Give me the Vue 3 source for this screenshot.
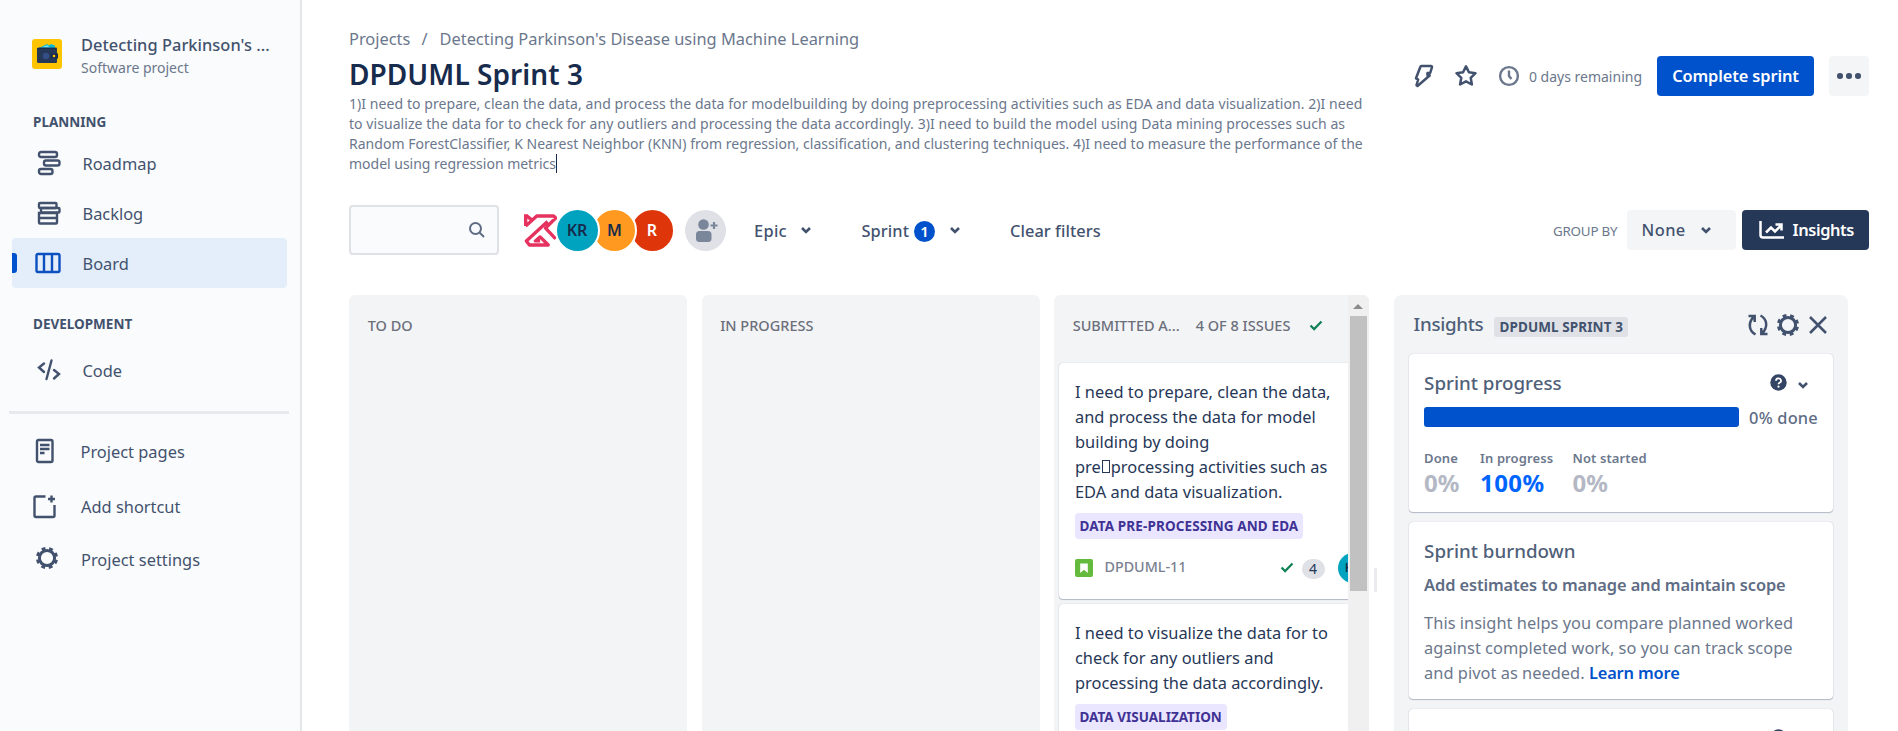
<script setup>
const filters = [
  { name: 'KR', cls: 'teal' },
  { name: 'M', cls: 'amber' },
  { name: 'R', cls: 'red' }
]
const goal = [
  '1)I need to prepare, clean the data, and process the data for modelbuilding by doing preprocessing activities such as EDA and data visualization. 2)I need',
  'to visualize the data for to check for any outliers and processing the data accordingly. 3)I need to build the model using Data mining processes such as',
  'Random ForestClassifier, K Nearest Neighbor (KNN) from regression, classification, and clustering techniques. 4)I need to measure the performance of the'
]
const stats = [
  { label: 'Done', value: '0%', cls: 'done' },
  { label: 'In progress', value: '100%', cls: 'progress' },
  { label: 'Not started', value: '0%', cls: 'todo' }
]
</script>

<template>
  <div class="app">
    <aside class="sidebar">
      <div class="project">
        <svg class="logo" width="30" height="30" viewBox="0 0 30 30">
          <rect width="30" height="30" rx="3" fill="#FFC400" />
          <path d="M7 9 12 6.500 15 5l2 1.500L19 5l4 1.500L22.500 10H7z" fill="#00B8D9" />
          <path d="M10 8.500 15 6l3 2.500z" fill="#79E2F2" />
          <path d="M6.500 8.500H24a1 1 0 0 1 1 1V14.500a1.500 1.500 0 0 1 1 1.500v2a1.500 1.500 0 0 1-1 1.500V23a1 1 0 0 1-1 1H6.500a1.500 1.500 0 0 1-1.500-1.500V10a1.500 1.500 0 0 1 1.500-1.500z" fill="#253858" />
          <path d="M5.500 9.500H24" stroke="#172B4D" />
          <circle cx="14" cy="17" r="3.200" fill="#344E86" />
          <path d="M21 14.500h5v5h-5a2.500 2.500 0 0 1 0-5z" fill="#172B4D" />
          <circle cx="22" cy="17" r="1.300" fill="#FFC400" />
        </svg>
        <div class="project-text">
          <div class="project-name">Detecting Parkinson's ...</div>
          <div class="project-type">Software project</div>
        </div>
      </div>

      <div class="heading">PLANNING</div>
      <a class="item">
        <svg width="24" height="26" viewBox="0 0 24 26" class="line">
          <rect x="2" y="2" width="18" height="5" rx="2" />
          <rect x="7" y="10.500" width="15.500" height="5" rx="2" />
          <rect x="2" y="19" width="13.500" height="5" rx="2" />
        </svg><span>Roadmap</span>
      </a>
      <a class="item">
        <svg width="24" height="26" viewBox="0 0 24 26" class="line">
          <rect x="2" y="3" width="17.500" height="5" rx="1" />
          <path d="M4 8h17.500a1 1 0 0 1 1 1v2.500a1 1 0 0 1-1 1H4" />
          <path d="M4 8v5" />
          <path d="M2 13h18v9.500a1 1 0 0 1-1 1H3a1 1 0 0 1-1-1zM2 18h18" />
        </svg><span>Backlog</span>
      </a>
      <a class="item active">
        <svg width="26" height="22" viewBox="0 0 26 22" class="line board">
          <rect x="1.500" y="2" width="23" height="18" rx="1.500" />
          <path d="M9 2v18M17 2v18" />
        </svg><span>Board</span>
      </a>
      <div class="heading dev">DEVELOPMENT</div>
      <a class="item">
        <svg width="24" height="24" viewBox="0 0 24 24" class="line">
          <path d="M7 5.500 2 9.500l5 4.500M17 12l5 4-5 4.500M14.500 2.500l-5 18.500" stroke-linecap="round" />
        </svg><span>Code</span>
      </a>
      <hr />
      <a class="item pages">
        <svg width="24" height="26" viewBox="0 0 24 26" class="line">
          <rect x="2" y="2" width="15.500" height="22" rx="1.500" />
          <path d="M5 7h9.500M5 11h9.500M5 15h4.500" />
        </svg><span>Project pages</span>
      </a>
      <a class="item add">
        <svg width="24" height="26" viewBox="0 0 24 26" class="line">
          <path d="M12.500 3.500H3a1.500 1.500 0 0 0-1.500 1.500v17.500A1.500 1.500 0 0 0 3 24h17a1.500 1.500 0 0 0 1.500-1.500V12" />
          <path d="M18.500 2.500v7M15 6h7" />
        </svg><span>Add shortcut</span>
      </a>
      <a class="item settings">
        <svg width="24" height="24" viewBox="0 0 24 24">
          <circle cx="12" cy="12" r="7.600" fill="none" stroke="#42526E" stroke-width="3" />
          <circle cx="12" cy="12" r="9.300" fill="none" stroke="#42526E" stroke-width="3.600" stroke-dasharray="3.700 3.604" stroke-dashoffset="-1.800" />
        </svg><span>Project settings</span>
      </a>
    </aside>

    <main>
      <header>
        <div class="head-left">
          <div class="crumbs"><span>Projects</span><span class="slash">/</span><span>Detecting Parkinson's Disease using Machine Learning</span></div>
          <h1>DPDUML Sprint 3</h1>
          <div class="goal">
            <div v-for="(g, i) in goal" :key="i" :class="'g' + i">{{ g }}</div>
            <div class="g3">model using regression metrics<i class="caret"></i></div>
          </div>
        </div>
        <div class="head-right">
          <svg class="bolt" width="20" height="24" viewBox="0 0 20 24"><path d="M7.500 2H17a1 1 0 0 1 1 1.200L16.200 9h-2.700v2.500h2.200L3.500 22l-1-1 1.700-5.500L2 14.300 6.300 3a1.500 1.500 0 0 1 1.200-1z" /></svg>
          <svg class="star" width="24" height="24" viewBox="0 0 24 24"><path d="M12 2.300l2.900 6 6.600.9-4.800 4.600 1.200 6.700-5.900-3.200-5.900 3.200 1.200-6.700-4.800-4.600 6.600-.9z" /></svg>
          <svg class="clock" width="22" height="22" viewBox="0 0 22 22"><circle cx="11" cy="11" r="8.900" /><path d="M11 5.500V11l2.500 3" /></svg>
          <span class="remain">0 days remaining</span>
          <button class="primary">Complete sprint</button>
          <button class="dots"><i></i><i></i><i></i></button>
        </div>
      </header>

      <div class="toolbar">
        <div class="search">
          <svg width="18" height="18" viewBox="0 0 18 18"><circle cx="7.500" cy="7.500" r="5.500" /><path d="M11.500 11.500 16 16" /></svg>
        </div>
        <div class="avatars">
          <svg class="klogo" width="33" height="33" viewBox="0 0 98 98">
            <path d="M5 1V36M5 36 38 6H88L94 12 64 42 94 74M70 22 7 80 16 92H72L48 68 34 80H48" />
            <path d="M6 4 24 18" />
          </svg>
          <span v-for="f in filters" :key="f.name" class="avatar" :class="f.cls">{{ f.name }}</span>
        </div>
        <span class="add-people">
          <svg width="41" height="41" viewBox="0 0 41 41"><circle cx="18.500" cy="14.500" r="5.300" /><rect x="11" y="21" width="15.500" height="11" rx="3.500" /><path d="M29 12v7M25.500 15.500h7" stroke="#7A869A" stroke-width="2.200" /></svg>
        </span>
        <span class="filter epic">Epic</span><svg class="chev c1" width="12" height="8" viewBox="0 0 12 8"><path d="M2 2l4 4 4-4" /></svg>
        <span class="filter sprint">Sprint</span><span class="count">1</span><svg class="chev c2" width="12" height="8" viewBox="0 0 12 8"><path d="M2 2l4 4 4-4" /></svg>
        <span class="filter clear">Clear filters</span>
        <span class="group">GROUP BY</span>
        <button class="none">None<svg class="chev" width="12" height="8" viewBox="0 0 12 8"><path d="M2 2l4 4 4-4" /></svg></button>
        <button class="insights-btn">
          <svg width="26" height="20" viewBox="0 0 26 20"><path d="M1.500 1v14a2.500 2.500 0 0 0 2.500 2.500h21" /><path d="M7 12.500l5-5 4 4L22 5.500M16.500 4.500H22.500v6" /></svg>
          Insights
        </button>
      </div>

      <div class="board-area">
        <section class="column"><div class="col-head">TO DO</div></section>
        <section class="column"><div class="col-head">IN PROGRESS</div></section>
        <section class="column scrolled">
          <div class="viewport">
            <div class="col-head"><span>SUBMITTED A...</span><span class="of">4 OF 8 ISSUES</span><svg class="check" width="14" height="11" viewBox="0 0 14 11"><path d="M1.500 5.500l3.600 3.600L12.500 1.500" /></svg></div>
            <article class="issue">
              <div class="summary">I need to prepare, clean the data,<br />and process the data for model<br />building by doing<br />pre<i class="tofu"></i>processing activities such as<br />EDA and data visualization.</div>
              <span class="label">DATA PRE-PROCESSING AND EDA</span>
              <div class="foot">
                <svg width="18" height="18" viewBox="0 0 18 18"><rect width="18" height="18" rx="2" fill="#63BA3C" /><path d="M5.200 4.500H12.800V14L9 10.800 5.200 14z" fill="#fff" /></svg>
                <span class="key">DPDUML-11</span>
                <svg class="check" width="14" height="11" viewBox="0 0 14 11"><path d="M1.500 5.500l3.600 3.600L12.500 1.500" /></svg>
                <span class="badge">4</span>
                <span class="mini">KR</span>
              </div>
            </article>
            <article class="issue">
              <div class="summary">I need to visualize the data for to<br />check for any outliers and<br />processing the data accordingly.</div>
              <span class="label second">DATA VISUALIZATION</span>
            </article>
          </div>
          <div class="scroll"><i class="arrow"></i><i class="thumb"></i></div>
        </section>
        <div class="handle"></div>
        <aside class="panel">
          <div class="panel-head">
            <span class="ptitle">Insights</span><span class="ptag">DPDUML SPRINT 3</span>
            <svg class="refresh" width="24" height="24" viewBox="0 0 24 24"><path d="M9.500 21.500C3 18 1.500 10 8 3.500M2.500 3H8.700V9M14.500 2.500C21 6 22.500 14 16 20.500M21.500 21H15.300V15" /></svg>
            <svg class="gear" width="24" height="24" viewBox="0 0 24 24">
              <circle cx="12" cy="12" r="7.600" fill="none" stroke="#42526E" stroke-width="3" />
              <circle cx="12" cy="12" r="9.300" fill="none" stroke="#42526E" stroke-width="3.600" stroke-dasharray="3.700 3.604" stroke-dashoffset="-1.800" />
            </svg>
            <svg class="close" width="20" height="20" viewBox="0 0 20 20"><path d="M2 2l16 16M18 2L2 18" /></svg>
          </div>
          <div class="card progress-card">
            <div class="ctitle">Sprint progress
              <svg class="help" width="17" height="17" viewBox="0 0 17 17"><circle cx="8.500" cy="8.500" r="8.200" fill="#344563" /><path d="M6 6.700a2.500 2.300 0 1 1 3.600 2Q8.500 9.300 8.500 10.300" fill="none" stroke="#fff" stroke-width="1.800" /><circle cx="8.500" cy="12.700" r="1.100" fill="#fff" /></svg>
              <svg class="chev" width="12" height="8" viewBox="0 0 12 8"><path d="M2 2l4 4 4-4" /></svg>
            </div>
            <div class="bar-row"><div class="bar"></div><span>0% done</span></div>
            <div class="stats">
              <div v-for="s in stats" :key="s.label" class="stat" :class="s.cls"><div class="slabel">{{ s.label }}</div><div class="svalue">{{ s.value }}</div></div>
            </div>
          </div>
          <div class="card burn">
            <div class="ctitle">Sprint burndown</div>
            <div class="sub">Add estimates to manage and maintain scope</div>
            <p>This insight helps you compare planned worked<br />against completed work, so you can track scope<br />and pivot as needed. <a>Learn more</a></p>
          </div>
          <div class="card epic-card">
            <div class="ctitle">Epic progress
              <svg class="help" width="17" height="17" viewBox="0 0 17 17"><circle cx="8.500" cy="8.500" r="8.200" fill="#344563" /></svg>
            </div>
          </div>
        </aside>
      </div>
    </main>
  </div>
</template>

<style>
html, body { overflow: hidden; background: #fff; }
</style>
<style scoped>
.app { display: flex; width: 1898px; height: 731px; overflow: hidden; font: 400 16.4px/22px "Noto Sans", sans-serif; color: #42526e; white-space: nowrap; }
.app * { box-sizing: border-box; }
svg { display: block; flex: none; }
button { border: 0; padding: 0; margin: 0; font: inherit; color: inherit; display: flex; align-items: center; }
.sidebar { width: 302px; flex: none; background: #fafbfc; border-right: 2px solid #e4e6ea; padding: 33px 0 0; }
.project { display: flex; height: 46px; padding-left: 32px; }
.logo { margin-top: 6px; }
.project-text { margin-left: 19px; }
.project-name { font-weight: 500; line-height: 24px; color: #42526e; letter-spacing: .04px; }
.project-type { font-size: 14px; line-height: 22px; color: #6b778c; }
.heading { margin: 33px 0 6px 33px; font-size: 13.500px; font-weight: 700; line-height: 20px; }
.heading.dev { margin: 26px 0 11px 33px; }
.item { display: flex; align-items: center; height: 50px; margin: 0 13px 0 12px; padding-left: 24px; border-radius: 4px; position: relative; }
.item svg { width: 26px; }
.item span { margin: 2px 0 0 20.500px; }
.line { fill: none; stroke: #42526e; stroke-width: 2.400; }
.active { background: #e4eefa; }
.active::before { content: ""; position: absolute; left: 0; top: 15px; width: 5px; height: 20px; background: #0052cc; border-radius: 0 3px 3px 0; }
.active svg { margin-left: -1px; margin-right: 1px; }
.active .line { stroke: #0c50c0; }
hr { border: 0; height: 3px; background: #e8e9ec; margin: 16px 11px 12px 9px; }
.pages svg { margin-left: -2px; margin-right: 2px; }
.pages span { margin-left: 18.500px; margin-top: 1px; }
.add { margin-top: 6px; }
.add svg { margin-left: -4px; margin-right: 4px; margin-top: -2px; }
.add span { margin-left: 19px; margin-top: 0; }
.settings { margin-top: 2px; }
.settings svg { margin-left: -2px; margin-right: 2px; margin-top: -3px; }
.settings span { margin-left: 19px; margin-top: 1px; }

main { flex: 1; min-width: 0; padding: 27px 29px 0 47px; }
header { display: flex; justify-content: space-between; height: 178px; }
.crumbs { display: flex; color: #6b778c; height: 23px; line-height: 23px; }
.slash { margin: 0 12px 0 11px; }
h1 { margin: 6px 0 0; font-size: 28px; line-height: 36px; font-weight: 600; color: #172b4d; letter-spacing: .05px; }
.goal { margin-top: 2px; font-size: 14px; line-height: 20px; letter-spacing: .057px; color: #6b778c; }
.g0 { letter-spacing: .067px; }
.g2 { letter-spacing: .025px; }
.g3 { letter-spacing: -.01px; }
.caret { display: inline-block; width: 1px; height: 19px; background: #172b4d; vertical-align: -4px; }
.head-right { display: flex; align-items: center; height: 40px; margin-top: 29px; }
.bolt { fill: none; stroke: #42526e; stroke-width: 2.500; stroke-linejoin: round; }
.star { fill: none; stroke: #42526e; stroke-width: 2.500; stroke-linejoin: round; margin-left: 20px; }
.clock { fill: none; stroke: #6b778c; stroke-width: 2.400; margin-left: 20px; }
.remain { font-size: 14px; color: #6b778c; margin-left: 9px; margin-top: 1px; }
.primary { justify-content: center; width: 157px; height: 40px; margin-left: 15px; background: #0052cc; color: #fff; font-weight: 600; letter-spacing: -.12px; border-radius: 4px; }
.dots { width: 40px; height: 40px; justify-content: center; gap: 3.500px; margin-left: 15px; background: #f4f5f7; border-radius: 4px; }
.dots i { width: 5.500px; height: 5.500px; border-radius: 50%; background: #42526e; }

.toolbar { display: flex; align-items: center; height: 50px; color: #42526e; }
.search { width: 150px; height: 50px; border: 2px solid #dfe1e6; border-radius: 4px; background: #fafbfc; display: flex; align-items: center; justify-content: flex-end; padding-right: 11px; }
.search svg { fill: none; stroke: #5e6c84; stroke-width: 2; }
.avatars { display: flex; align-items: center; margin-left: 24.500px; width: 149px; }
.klogo { fill: none; stroke: #e6325f; stroke-width: 10; stroke-linejoin: round; }
.avatar { width: 45px; height: 45px; flex: none; border: 2.500px solid #fff; border-radius: 50%; display: flex; align-items: center; justify-content: center; font-size: 16px; font-weight: 600; margin-right: -7.500px; position: relative; }
.klogo + .avatar { margin-left: -2px; }
.teal { background-color: #00a3bf; color: #172b4d; z-index: 3; }
.amber { background-color: #ff991f; color: #172b4d; z-index: 2; }
.red { background-color: #de350b; color: #fff; z-index: 1; }
.add-people { width: 41px; height: 41px; border-radius: 50%; background: #dfe1e6; margin-left: 12px; }
.add-people svg { fill: #7a869a; }
.filter { font-weight: 500; margin-top: 1px; }
.chev { fill: none; stroke: #42526e; stroke-width: 2.600; }
.epic { margin-left: 28.500px; letter-spacing: .3px; }
.c1 { margin-left: 13px; }
.sprint { margin-left: 49.500px; letter-spacing: .08px; }
.count { width: 21px; height: 21px; margin: 2px 0 0 5px; border-radius: 50%; background: #0052cc; color: #fff; font-size: 15px; font-weight: 600; line-height: 20px; text-align: center; }
.c2 { margin-left: 14px; }
.clear { margin-left: 49px; letter-spacing: .04px; }
.group { margin-left: auto; font-size: 13.400px; letter-spacing: -.2px; color: #6b778c; margin-right: 9.500px; margin-top: 2px; }
.none { width: 109px; height: 40px; background: #f4f5f7; border-radius: 4px; padding-left: 14.500px; font-weight: 500; letter-spacing: .45px; }
.none .chev { margin-left: 14.500px; }
.insights-btn { width: 127px; height: 40px; margin-left: 6px; background: #253858; color: #fff; border-radius: 4px; padding-left: 16.500px; font-weight: 600; letter-spacing: -.4px; }
.insights-btn svg { fill: none; stroke: #fff; stroke-width: 2.500; margin-right: 8px; }

.board-area { display: flex; margin-top: 40px; height: 436px; }
.column { width: 338px; flex: none; margin-right: 14.500px; background: #f3f4f6; border-radius: 6px 6px 0 0; overflow: hidden; }
.col-head { height: 61px; padding-left: 18.700px; font-size: 14.500px; font-weight: 500; line-height: 61px; color: #6b6f7b; display: flex; }
.scrolled { width: 315px; display: flex; margin-right: 5.100px; }
.viewport { width: 293.500px; overflow: hidden; flex: none; }
.of { margin-left: 16px; }
.check { fill: none; stroke: #118156; stroke-width: 2.200; }
.col-head .check { margin: 25px 0 0 19px; }
.scrolled .col-head { height: 68px; }
.issue { width: 327px; margin: 0 0 5px 5px; height: 236px; padding: 16px 0 0 15.500px; background: #fff; border-radius: 4px; box-shadow: 0 1px 1px rgba(9,30,66,.25), 0 0 1px rgba(9,30,66,.31); color: #253858; }
.summary { line-height: 25px; color: #263757; padding-left: .5px; }
.tofu { display: inline-block; width: 8px; height: 13px; border: 1px solid #263757; margin: 0 1px; vertical-align: 0; }
.label { display: block; width: fit-content; margin-top: 9px; height: 26px; line-height: 26px; padding: 0 5px; background: #eae6ff; border-radius: 4px; color: #403294; font-size: 13.500px; font-weight: 700; letter-spacing: .12px; }
.second { letter-spacing: 0; }
.foot { display: flex; align-items: center; margin-top: 13.500px; height: 30px; padding-left: .5px; }
.key { margin: -2px 0 0 11.500px; width: 175px; font-size: 14.300px; font-weight: 500; color: #7a8190; }
.badge { width: 23px; height: 20px; margin: 2px 0 0 8px; border-radius: 10px; background: #dfe1e6; font-size: 14px; line-height: 20px; text-align: center; }
.mini { width: 30px; height: 30px; margin-left: 13px; border-radius: 50%; background: #00a3bf; color: #172b4d; font-size: 12px; font-weight: 600; line-height: 29px; text-align: center; flex: none; }
.scroll { position: relative; width: 21.500px; background: #f0f0f0; flex: 1; }
.arrow { position: absolute; left: 5.500px; top: 9px; border: 5px solid transparent; border-top: 0; border-bottom: 5px solid #8d8d8d; }
.thumb { position: absolute; left: 2px; top: 21px; width: 17px; height: 275px; background: #c1c1c1; }
.handle { width: 3px; height: 24px; margin-top: 273px; background: #ebecf0; }

.panel { width: 454px; margin-left: 17px; padding: 0 15px; background: #f3f4f6; border-radius: 8px 8px 0 0; overflow: hidden; flex: none; }
.panel-head { display: flex; height: 59px; }
.ptitle { font-size: 18.750px; font-weight: 500; letter-spacing: -.3px; line-height: 58px; color: #505f79; margin-left: 4.500px; }
.ptag { height: 20px; margin: 22px 0 0 11px; padding: 0 5px; background: #dfe1e6; border-radius: 3px; font-size: 13.500px; font-weight: 700; line-height: 20px; letter-spacing: .1px; }
.refresh { margin: 18px 0 0 auto; fill: none; stroke: #42526e; stroke-width: 2.500; }
.gear { margin: 18px 0 0 6px; }
.close { margin: 20px 5px 0 8px; fill: none; stroke: #42526e; stroke-width: 2.500; }
.card { background: #fff; border-radius: 4px; padding: 14px 15px 0; margin-bottom: 10px; box-shadow: 0 1px 1px rgba(9,30,66,.25), 0 0 1px rgba(9,30,66,.31); }
.progress-card { height: 158px; }
.burn { height: 177px; }
.epic-card { height: 60px; }
.ctitle { display: flex; align-items: center; height: 29px; font-size: 18.750px; font-weight: 500; color: #505f79; letter-spacing: 0; }
.help { margin-left: auto; }
.ctitle .chev { margin: 4px 9px 0 10.500px; }
.epic-card .help { margin-right: 31.500px; }
.bar-row { display: flex; align-items: center; margin-top: 10px; height: 20px; font-weight: 500; letter-spacing: .2px; color: #5e6c84; }
.bar { width: 315px; height: 20px; background: #0052cc; border-radius: 3px; margin-right: 10px; }
.bar-row span { margin-top: 1px; }
.stats { display: flex; margin-top: 21px; }
.slabel { font-size: 13px; font-weight: 600; letter-spacing: .1px; line-height: 20px; color: #6b778c; }
.svalue { font-size: 24px; font-weight: 700; line-height: 29px; color: #b3b8c4; }
.done { width: 56px; }
.stat.progress { width: 92.500px; }
.stat.progress .svalue { color: #0065ff; letter-spacing: .4px; }
.sub { font-weight: 600; margin-top: 8px; line-height: 24px; letter-spacing: -.11px; color: #5e6c84; }
p { margin: 13px 0 0; line-height: 25px; color: #6b778c; letter-spacing: .02px; }
p a { color: #0052cc; font-weight: 600; letter-spacing: -.15px; }
</style>
